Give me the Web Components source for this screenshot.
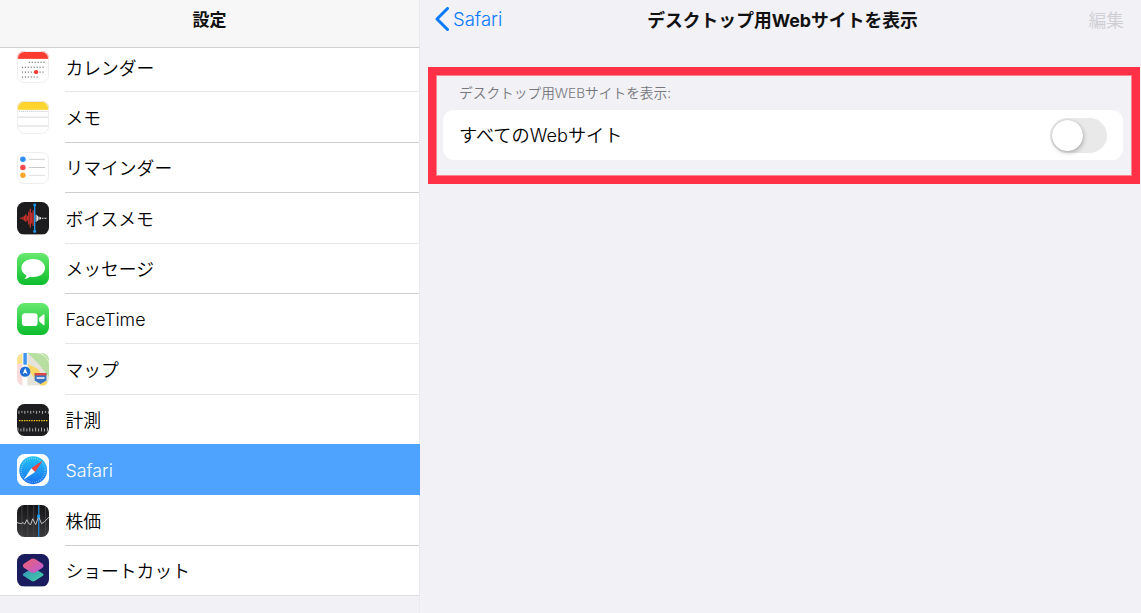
<!DOCTYPE html>
<html lang="ja">
<head>
<meta charset="utf-8">
<title>設定</title>
<style>
  html, body { margin: 0; height: 100%; }
  body { font-family: Inter, "Noto Sans CJK JP", sans-serif; }
</style>
</head>
<body>
<settings-app>
  <settings-sidebar slot="sidebar">
    <settings-row icon="calendar">カレンダー</settings-row>
    <settings-row icon="notes" dark>メモ</settings-row>
    <settings-row icon="reminders" dark>リマインダー</settings-row>
    <settings-row icon="voice">ボイスメモ</settings-row>
    <settings-row icon="messages" dark>メッセージ</settings-row>
    <settings-row icon="facetime" latin>FaceTime</settings-row>
    <settings-row icon="maps">マップ</settings-row>
    <settings-row icon="measure" nosep>計測</settings-row>
    <settings-row icon="safari" selected latin>Safari</settings-row>
    <settings-row icon="stocks" dark>株価</settings-row>
    <settings-row icon="shortcuts" last>ショートカット</settings-row>
  </settings-sidebar>
  <detail-pane slot="detail">
    <highlight-box>
      <group-label>デスクトップ用WEBサイトを表示:</group-label>
      <toggle-card>すべてのWebサイト</toggle-card>
    </highlight-box>
  </detail-pane>
</settings-app>

<script>
const ICONS = {
  calendar: `<rect width="33" height="33" fill="#fff"/><rect width="33" height="8" fill="#fb3a30"/>
    <g fill="none" stroke="#333" stroke-width="1" stroke-dasharray="1 2">
      <path d="M12 11.500H28M5 16.500H28M5 21.500H28M5 26.500H21"/></g>
    <circle cx="19.500" cy="21.500" r="2.200" fill="#f6352b"/>`,
  notes: `<rect width="33" height="33" fill="#fff"/><rect width="33" height="9" fill="#fed52f"/>
    <rect width="33" height="1.500" fill="#f2c21c"/>
    <path d="M0 10.500H33" stroke="#bbb" stroke-dasharray="1 1"/>
    <path d="M0 16.500H33M0 25.500H33" stroke="#d6d6d6"/>`,
  reminders: `<rect width="33" height="33" fill="#fff"/>
    <circle cx="6" cy="7.500" r="2.800" fill="#2f8df5"/><circle cx="6" cy="15.800" r="2.800" fill="#f5484a"/><circle cx="6" cy="23.800" r="2.800" fill="#fba82d"/>
    <path d="M12 7.500H28.500" stroke="#d2d2d2"/><path d="M12 15.800H28.500" stroke="#c8c8c8"/><path d="M12 23.800H28.500" stroke="#dedede"/>`,
  voice: `<rect width="33" height="33" fill="#1c1c1e"/>
    <path d="M3 16.500H5M6 15V18M7.500 14V19M9 12.500V20.500M10.500 14V19M12 10V23M13.500 7V26M15 11V22M16.500 8.500V24.500" stroke="#e8342c" stroke-width="1.100" fill="none"/>
    <path d="M19.500 13V20M21 14V19M22.500 15V18M24 15.500V17.500M25.500 16.500H27M28 16.500H30" stroke="#f2f2f2" stroke-width="1.100" fill="none"/>
    <path d="M18 3V30" stroke="#1d97ee" stroke-width="1.400"/>
    <circle cx="18" cy="3" r="1.500" fill="#1d97ee"/><circle cx="18" cy="30" r="1.500" fill="#1d97ee"/>`,
  messages: `<rect width="33" height="33" fill="url(#green)"/>
    <path d="M16.500 6C9.300 6 4.500 10.200 4.500 15.300c0 3.300 2 6 5.200 7.600-.3 1.500-1.200 2.600-2.200 3.500 2.200-.1 4.400-1 5.800-2.200 1 .2 2 .3 3.200.3 7.200 0 12-4.100 12-9.200S23.700 6 16.500 6z" fill="#fff"/>`,
  facetime: `<rect width="33" height="33" fill="url(#green)"/>
    <rect x="5" y="10.500" width="16" height="13" rx="3.200" fill="#fff"/>
    <path d="M22.500 15.300l4.300-3.600c.6-.5 1.200-.2 1.200.5v9.600c0 .7-.6 1-1.200.5l-4.300-3.600z" fill="#fff"/>`,
  maps: `<rect width="33" height="33" fill="#e6e4d8"/>
    <path d="M11 0H33V25L22 11z" fill="#b6dfa1"/>
    <path d="M19 0C28 1 33 7 33 15V9C30 4 27 1 24 0z" fill="#e9f1d8"/>
    <path d="M0 0H6V33H0z" fill="#fcd9dc"/><path d="M0 0H7V11H0z" fill="#fde38e"/>
    <path d="M11 11L21 16L33 33H24L14 21z" fill="#fbd765"/>
    <path d="M5.500 0H10.500V33H5.500z" fill="#fff"/>
    <path d="M6.500 0H10V12H6.500z" fill="#3d93ef"/>
    <circle cx="8.300" cy="19" r="5.300" fill="#1f6fd6"/>
    <path d="M8.300 15.200l2.500 6.300-2.500-1.300-2.500 1.300z" fill="#fff"/>
    <path d="M18 20.500H30V28L24 31.500 18 28z" fill="#3a74c4"/><path d="M18 20.500H30V23H18z" fill="#d94a4a"/>
    <path d="M20 25.500H28" stroke="#fff" stroke-width="1.500"/>`,
  measure: `<rect width="33" height="33" fill="#1d1d1f"/>
    <path d="M2 7V10M5 7V9M8 7V10M11 7V9M14 7V10M17 7V9M20 7V10M23 7V9M26 7V10M29 7V9M32 7V10" stroke="#d8d8d8" stroke-width=".8"/>
    <path d="M1 24V28M4 25V28M7 24V28M10 25V28M13 24V28M16 25V28M19 24V28M22 25V28M25 24V28M28 25V28M31 24V28" stroke="#d8d8d8" stroke-width=".8"/>
    <path d="M2 17H31" stroke="#f5c518" stroke-width="1.300" stroke-dasharray="1.500 1"/>`,
  safari: `<rect width="33" height="33" fill="#fff"/>
    <circle cx="16.500" cy="16.500" r="14.200" fill="url(#sky)"/>
    <circle cx="16.500" cy="16.500" r="12.200" fill="none" stroke="#cfe6fb" stroke-width="1.400" stroke-dasharray=".6 1.600" opacity=".8"/>
    <path d="M26 7L14.600 14.600 18.400 18.400z" fill="#f6443c"/>
    <path d="M7 26L18.400 18.400 14.600 14.600z" fill="#fff"/>`,
  stocks: `<rect width="33" height="33" fill="url(#stock)"/>
    <path d="M5 0V33M11 0V33M17 0V33M23 0V33M29 0V33" stroke="#4a4a4c" stroke-width=".8"/>
    <path d="M22 0V33" stroke="#1f7fd0" stroke-width="1.200"/>
    <path d="M0 18L4 19 6 18 8 19.500 10 15 12 19 14 20 16 14 19 20 22 12 25 19 28 17 33 12" fill="none" stroke="#e8e8e8" stroke-width=".8"/>
    <rect x="20.500" y="10" width="3" height="3" fill="#18a0fb"/>`,
  shortcuts: `<rect width="33" height="33" fill="#1b1c5e"/>
    <path d="M16.500 14L26 19.500Q28 21 26 22.500L18 27.500Q16.500 28.300 15 27.500L7 22.500Q5 21 7 19.500z" fill="url(#sc2)"/>
    <path d="M16.500 4.500Q17.500 4.500 18.500 5.200L26 10Q28 12 26 14L18.500 18.800Q16.500 19.800 14.500 18.800L7 14Q5 12 7 10L14.500 5.200Q15.500 4.500 16.500 4.500z" fill="url(#sc1)"/>`
};

const GRADIENTS = `
  <linearGradient id="green" x1="0" y1="0" x2="0" y2="1"><stop offset="0" stop-color="#67e96f"/><stop offset="1" stop-color="#0cbc2b"/></linearGradient>
  <linearGradient id="sky" x1="0" y1="0" x2="0" y2="1"><stop offset="0" stop-color="#21c5f5"/><stop offset="1" stop-color="#1a6ff0"/></linearGradient>
  <linearGradient id="stock" x1="0" y1="0" x2="0" y2="1"><stop offset="0" stop-color="#141416"/><stop offset="1" stop-color="#3b3b3d"/></linearGradient>
  <linearGradient id="sc1" x1="0" y1="0" x2="1" y2="1"><stop offset="0" stop-color="#f2606a"/><stop offset="1" stop-color="#b55ce0"/></linearGradient>
  <linearGradient id="sc2" x1="0" y1="0" x2="1" y2="1"><stop offset="0" stop-color="#2f8fb8"/><stop offset="1" stop-color="#49d2a8"/></linearGradient>`;

class AppIcon extends HTMLElement {
  constructor() {
    super();
    this.attachShadow({ mode: "open" });
  }
  connectedCallback() {
    const name = this.getAttribute("name");
    const light = ["calendar", "notes", "reminders"].includes(name);
    this.shadowRoot.innerHTML = `
      <style>
        :host { display: block; width: 32.400px; height: 32.400px; flex: none; }
        svg { display: block; width: 100%; height: 100%; border-radius: 7.500px; }
        .light { outline: 1px solid #eee; outline-offset: -1px; }
      </style>
      <svg viewBox="0 0 33 33" class="${light ? "light" : ""}"><defs>${GRADIENTS}</defs>${ICONS[name]}</svg>`;
  }
}
customElements.define("app-icon", AppIcon);

class SettingsRow extends HTMLElement {
  constructor() {
    super();
    this.attachShadow({ mode: "open" });
  }
  connectedCallback() {
    this.shadowRoot.innerHTML = `
      <style>
        :host {
          display: flex;
          align-items: center;
          height: 50.400px;
          flex: none;
          box-sizing: border-box;
          padding-left: 16.500px;
          background: #fff;
          border-right: 1px solid #ebebef;
          color: #000;
          font-size: 17.800px;
          font-weight: 350;
        }
        :host([selected]) {
          background: #4da3ff;
          color: #fff;
          box-shadow: 0 -1px 0 #4da3ff;
          border-bottom: 1px solid #fff;
          border-right-color: #4da3ff;
        }
        :host([last]) { border-bottom: 1px solid #dedede; }
        .text {
          flex: 1;
          align-self: stretch;
          margin-left: 16.600px;
          display: flex;
          align-items: center;
          border-bottom: 1px solid #e6e6e6;
          box-sizing: border-box;
        }
        :host([latin]) .text { padding-top: 2px; }
        :host([dark]) .text { border-bottom-color: #cdcdcd; }
        :host([selected]) .text, :host([nosep]) .text, :host([last]) .text { border-bottom-color: transparent; }
      </style>
      <app-icon name="${this.getAttribute("icon")}"></app-icon>
      <div class="text"><slot></slot></div>`;
  }
}
customElements.define("settings-row", SettingsRow);

class SettingsSidebar extends HTMLElement {
  constructor() {
    super();
    this.attachShadow({ mode: "open" });
  }
  connectedCallback() {
    this.shadowRoot.innerHTML = `
      <style>
        :host {
          display: flex;
          flex-direction: column;
          height: 100%;
          background: #f1f1f6;
          box-sizing: border-box;
        }
        header {
          height: 48px;
          flex: none;
          box-sizing: border-box;
          display: flex;
          align-items: center;
          justify-content: center;
          padding-bottom: 10px;
          background: #f7f7f7;
          border-bottom: 1px solid #cfcfcf;
          border-right: 1px solid #ebebef;
          font-size: 17px;
          font-weight: 700;
          color: #111;
        }
        .clip { flex: 1; min-height: 0; overflow: hidden; }
        .list {
          display: flex;
          flex-direction: column;
          height: calc(100% + 6px);
          margin-top: -6px;
        }
        .fill { flex: 1; border-right: 1px solid #ebebef; }
      </style>
      <header>設定</header>
      <div class="clip"><div class="list"><slot></slot><div class="fill"></div></div></div>`;
  }
}
customElements.define("settings-sidebar", SettingsSidebar);

class HighlightBox extends HTMLElement {
  constructor() {
    super();
    this.attachShadow({ mode: "open" });
  }
  connectedCallback() {
    this.shadowRoot.innerHTML = `
      <style>
        :host {
          display: block;
          box-sizing: border-box;
          height: 117px;
          margin: 20px 1px 0 8px;
          border: 9px solid #ff3146;
          outline: 1px solid #f9838f;
          outline-offset: -9px;
          padding: 8px 8px 0 6px;
        }
      </style>
      <slot></slot>`;
  }
}
customElements.define("highlight-box", HighlightBox);

class GroupLabel extends HTMLElement {
  constructor() {
    super();
    this.attachShadow({ mode: "open" });
  }
  connectedCallback() {
    this.shadowRoot.innerHTML = `
      <style>
        :host {
          display: flex;
          align-items: center;
          height: 16px;
          margin-bottom: 10px;
          padding-left: 16px;
          font-size: 13.700px;
          font-weight: 350;
          color: #77777c;
        }
      </style>
      <slot></slot>`;
  }
}
customElements.define("group-label", GroupLabel);

class ToggleSwitch extends HTMLElement {
  constructor() {
    super();
    this.attachShadow({ mode: "open" });
  }
  connectedCallback() {
    this.shadowRoot.innerHTML = `
      <style>
        :host {
          display: flex;
          align-items: center;
          box-sizing: border-box;
          width: 57px;
          height: 35px;
          padding: 2px;
          border-radius: 18px;
          background: #e9e9ea;
        }
        .knob {
          width: 31px;
          height: 31px;
          border-radius: 50%;
          background: #fff;
          box-shadow: 1px 2px 4px rgba(0,0,0,.22), 0 0 1px rgba(0,0,0,.3);
        }
      </style>
      <div class="knob"></div>`;
  }
}
customElements.define("toggle-switch", ToggleSwitch);

class ToggleCard extends HTMLElement {
  constructor() {
    super();
    this.attachShadow({ mode: "open" });
  }
  connectedCallback() {
    this.shadowRoot.innerHTML = `
      <style>
        :host {
          display: flex;
          align-items: center;
          justify-content: space-between;
          box-sizing: border-box;
          height: 50px;
          padding: 0 16px;
          border-radius: 11px;
          background: #fff;
          font-size: 18.200px;
          font-weight: 350;
          color: #000;
        }
        span { padding-bottom: 3px; }
      </style>
      <span><slot></slot></span>
      <toggle-switch></toggle-switch>`;
  }
}
customElements.define("toggle-card", ToggleCard);

class DetailPane extends HTMLElement {
  constructor() {
    super();
    this.attachShadow({ mode: "open" });
  }
  connectedCallback() {
    this.shadowRoot.innerHTML = `
      <style>
        :host { display: block; height: 100%; background: #f1f1f6; }
        nav {
          display: grid;
          grid-template-columns: 1fr auto 1fr;
          align-items: center;
          height: 47px;
          padding: 0 17px 9px 14px;
          box-sizing: border-box;
          font-size: 17.800px;
        }
        .back { display: flex; align-items: center; gap: 4px; color: #0a7aff; font-size: 18.500px; font-weight: 350; }
        .back svg { display: block; }
        h1 { margin: 0 0 0 7px; font-size: 17.800px; font-weight: 700; color: #111; }
        .edit { justify-self: end; color: #cfcfd3; font-weight: 350; }
      </style>
      <nav>
        <div class="back">
          <svg width="15" height="24" viewBox="0 0 15 24"><path d="M13.500 1.500L3 12l10.500 10.500" fill="none" stroke="#0a7aff" stroke-width="3" stroke-linecap="round" stroke-linejoin="round"/></svg>
          <span>Safari</span>
        </div>
        <h1>デスクトップ用Webサイトを表示</h1>
        <div class="edit">編集</div>
      </nav>
      <slot></slot>`;
  }
}
customElements.define("detail-pane", DetailPane);

class SettingsApp extends HTMLElement {
  constructor() {
    super();
    this.attachShadow({ mode: "open" });
  }
  connectedCallback() {
    this.shadowRoot.innerHTML = `
      <style>
        :host {
          display: grid;
          grid-template-columns: 420px 721px;
          width: 1141px;
          height: 613px;
          overflow: hidden;
        }
      </style>
      <slot name="sidebar"></slot>
      <slot name="detail"></slot>`;
  }
}
customElements.define("settings-app", SettingsApp);
</script>
</body>
</html>
